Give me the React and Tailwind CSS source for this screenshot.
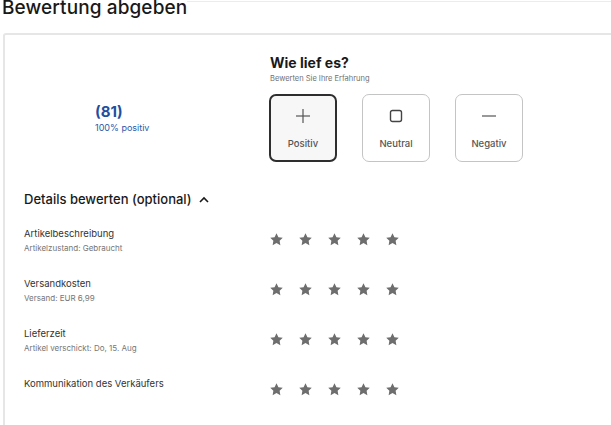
import React from 'react';

const font = { fontFamily: 'Inter, "Liberation Sans", sans-serif' };

const rows = [
  { label: 'Artikelbeschreibung', sub: 'Artikelzustand: Gebraucht' },
  { label: 'Versandkosten', sub: 'Versand: EUR 6,99' },
  { label: 'Lieferzeit', sub: 'Artikel verschickt: Do, 15. Aug' },
  { label: 'Kommunikation des Verkäufers', sub: null },
];

const Star = () => (
  <svg width="15" height="15" viewBox="0 0 24 24" className="text-[#6e6e6e]">
    <polygon
      fill="currentColor"
      points="12,2 15.09,8.26 22,9.27 17,14.14 18.18,21.02 12,17.77 5.82,21.02 7,14.14 2,9.27 8.91,8.26"
    />
  </svg>
);

const ChoiceButton = ({ label, selected, children }) => (
  <button
    className={
      selected
        ? 'w-[68px] h-[68px] rounded-[7px] border-2 border-[#2e2e2e] bg-[#f7f7f7] flex flex-col items-center'
        : 'w-[68px] h-[68px] rounded-[7px] border border-[#c4c4c4] bg-white flex flex-col items-center'
    }
  >
    <div className={selected ? 'h-[14px] mt-[13px] flex items-center' : 'h-[14px] mt-[14px] flex items-center'}>
      {children}
    </div>
    <span className="mt-[14px] text-[9.5px] leading-[14px] font-medium text-[#555]">{label}</span>
  </button>
);

export default function App() {
  return (
    <div className="w-[611px] h-[425px] overflow-hidden bg-white text-[#191919]" style={font}>
      {/* Title */}
      <div className="flex h-[33px]">
        <h1 className="pl-[2px] -mt-[2px] text-[19px] leading-[20px] font-medium tracking-[0.1px] whitespace-nowrap">
          Bewertung abgeben
        </h1>
        <div className="flex-1 h-px bg-[#ececec] mt-[1px]" />
      </div>

      {/* Card */}
      <div className="ml-[3px] w-[640px] h-[420px] border-2 border-[#e6e6e6] rounded-tl-[3px]">
        <div className="flex pt-[18px]">
          <div className="w-[265px] pl-[90px] pt-[50px]">
            <div className="text-[15px] leading-[18px] font-bold text-[#1f4f9e]">(81)</div>
            <div className="text-[9px] leading-[14px] text-[#2a5aa8]">100% positiv</div>
          </div>
          <div>
            <h2 className="text-[14px] leading-[20px] font-bold">Wie lief es?</h2>
            <p className="text-[7.5px] leading-[12px] text-[#707070]">Bewerten Sie Ihre Erfahrung</p>
            <div className="flex gap-[25px] mt-[9px] -ml-[1px]">
              <ChoiceButton label="Positiv" selected>
                <svg width="14" height="14" viewBox="0 0 14 14" stroke="#555" strokeWidth="1.2">
                  <line x1="7" y1="0" x2="7" y2="14" />
                  <line x1="0" y1="7" x2="14" y2="7" />
                </svg>
              </ChoiceButton>
              <ChoiceButton label="Neutral">
                <svg width="14" height="14" viewBox="0 0 14 14" fill="none" stroke="#444" strokeWidth="1.4">
                  <rect x="1.5" y="1.5" width="11" height="11" rx="2" />
                </svg>
              </ChoiceButton>
              <ChoiceButton label="Negativ">
                <svg width="14" height="14" viewBox="0 0 14 14" stroke="#555" strokeWidth="1.2">
                  <line x1="0" y1="7" x2="14" y2="7" />
                </svg>
              </ChoiceButton>
            </div>
          </div>
        </div>

        {/* Details */}
        <div className="pl-[19px] mt-[27px]">
          <div className="flex items-center gap-[7px] text-[13px] leading-[20px] font-medium">
            <span>Details bewerten (optional)</span>
            <svg width="10" height="7" viewBox="0 0 10 7" fill="none" stroke="#191919" strokeWidth="1.6">
              <polyline points="1,6 5,2 9,6" />
            </svg>
          </div>

          <div className="mt-[18px]">
            {rows.map((r) => (
              <div key={r.label} className="flex h-[50px]">
                <div className="w-[245px]">
                  <div className="text-[9.5px] leading-[14px] text-[#333]">{r.label}</div>
                  {r.sub && <div className="text-[8px] leading-[14px] text-[#767676]">{r.sub}</div>}
                </div>
                <div className="flex gap-[14px] mt-[5px]">
                  <Star />
                  <Star />
                  <Star />
                  <Star />
                  <Star />
                </div>
              </div>
            ))}
          </div>
        </div>
      </div>
    </div>
  );
}
